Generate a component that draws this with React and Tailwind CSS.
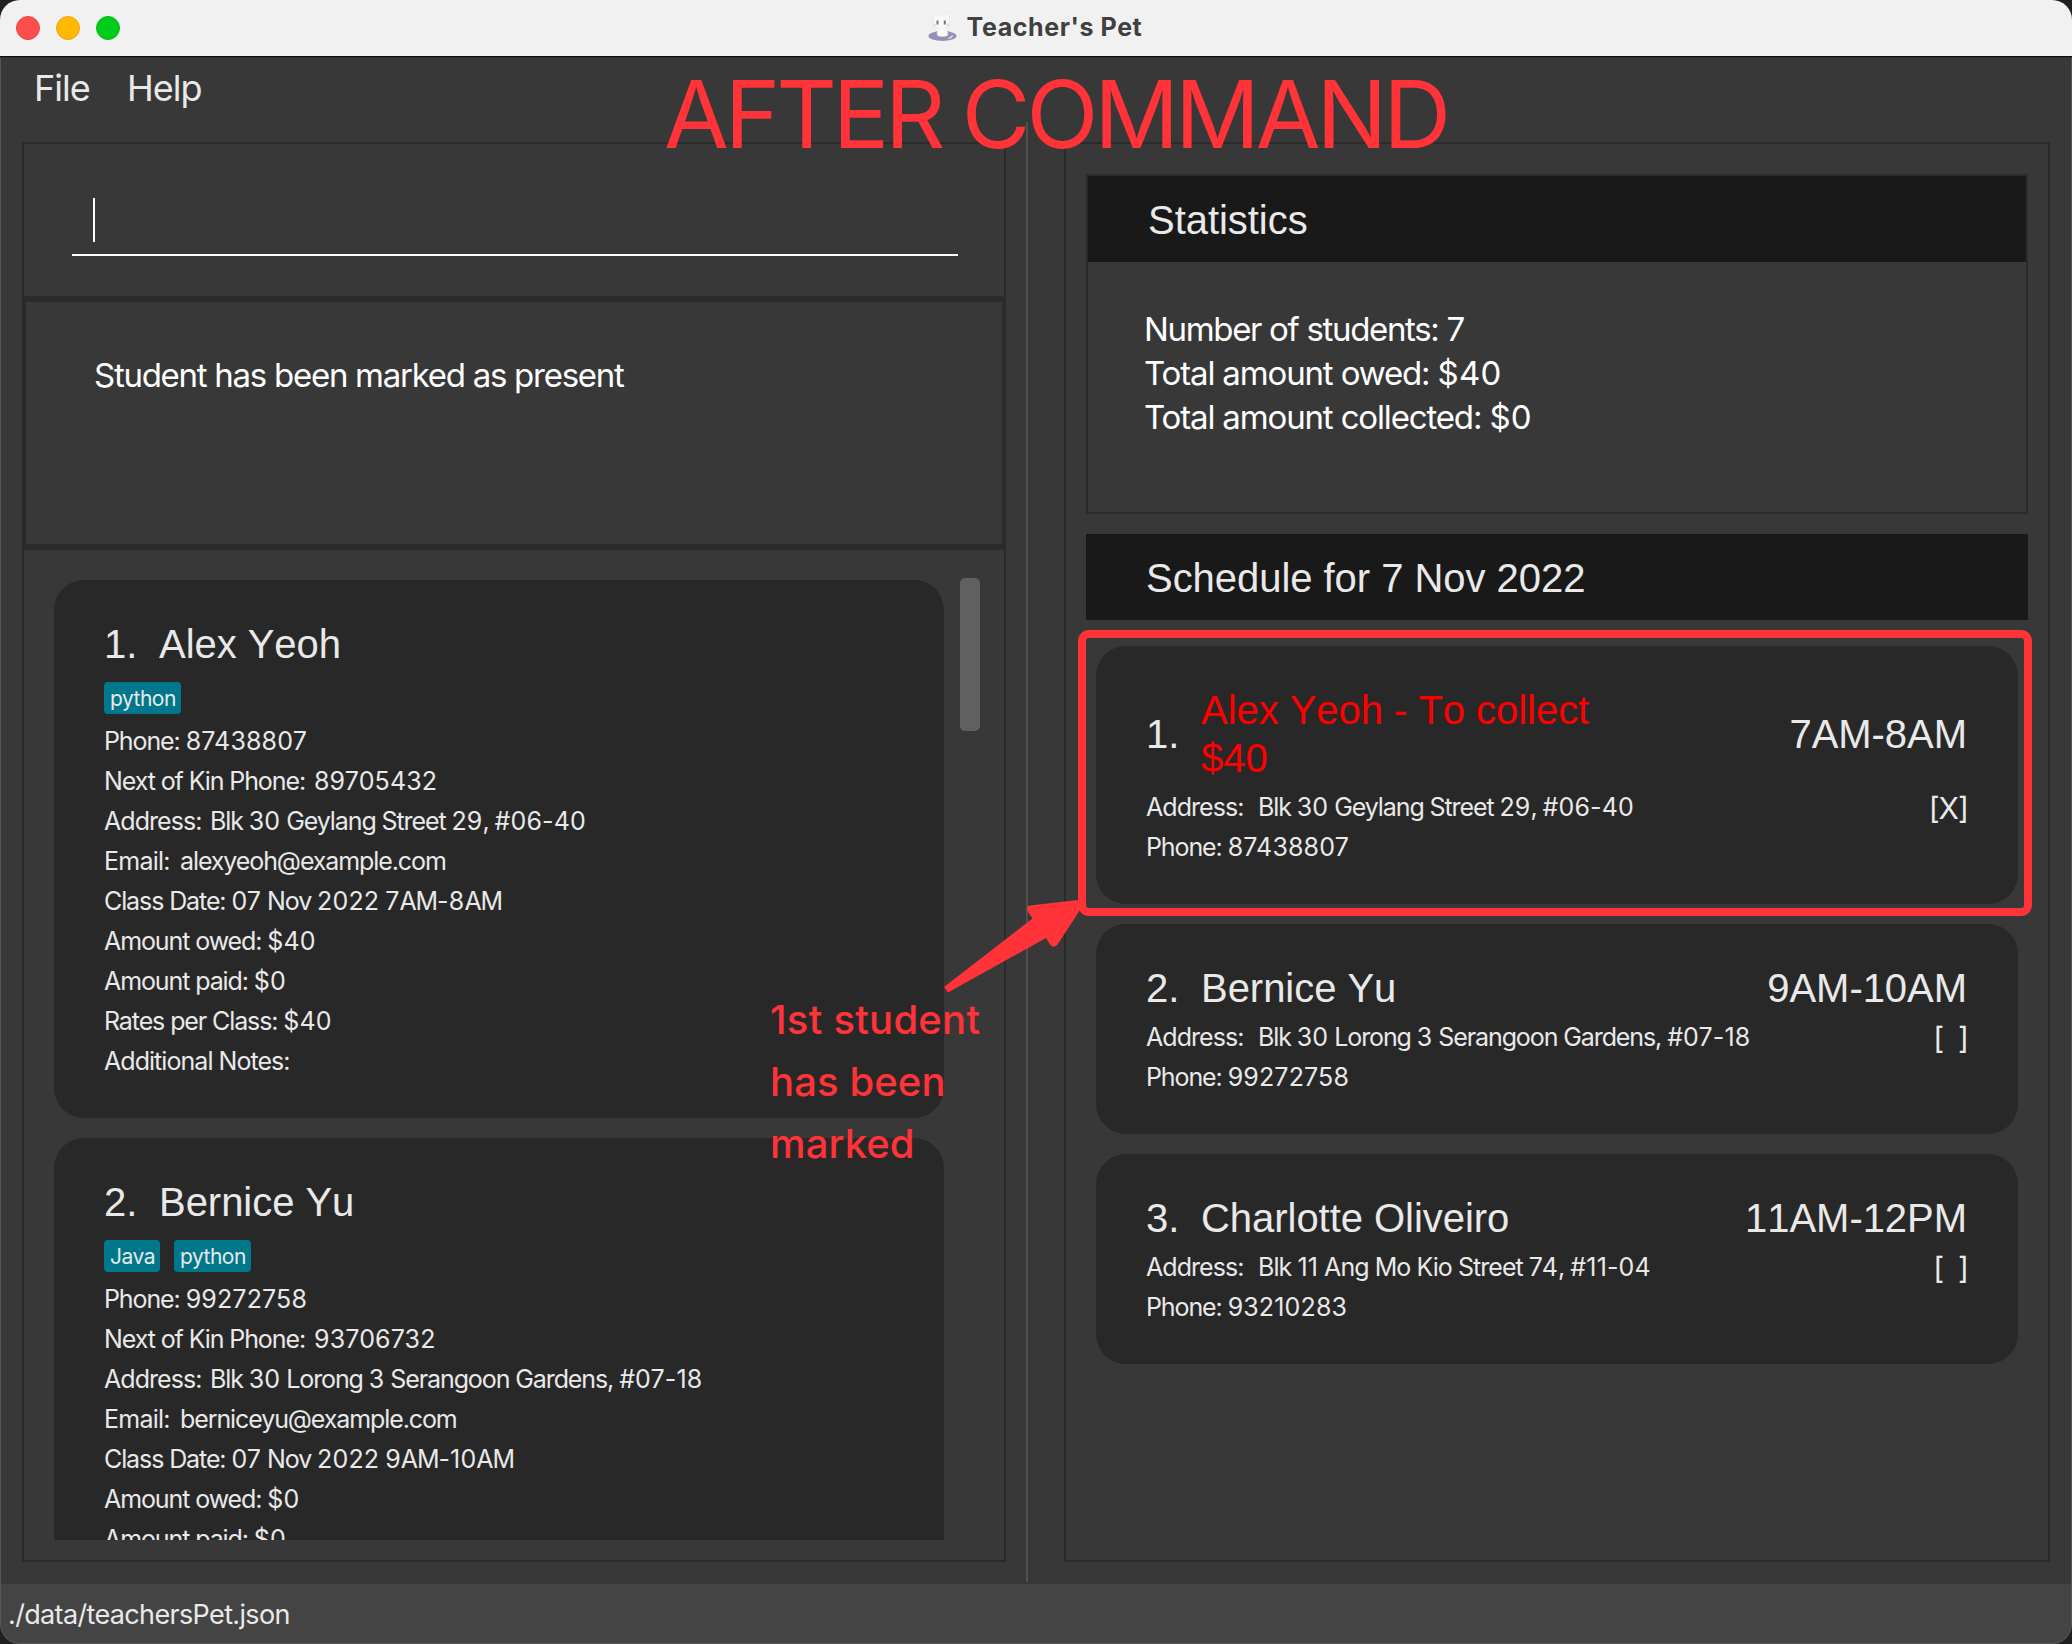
import React from "react";

const students = [
  {
    name: "Alex Yeoh",
    tags: ["python"],
    phone: "87438807",
    kin: "89705432",
    address: "Blk 30 Geylang Street 29, #06-40",
    email: "alexyeoh@example.com",
    lines: [
      "Class Date: 07 Nov 2022 7AM-8AM",
      "Amount owed: $40",
      "Amount paid: $0",
      "Rates per Class: $40",
      "Additional Notes:",
    ],
  },
  {
    name: "Bernice Yu",
    tags: ["Java", "python"],
    phone: "99272758",
    kin: "93706732",
    address: "Blk 30 Lorong 3 Serangoon Gardens, #07-18",
    email: "berniceyu@example.com",
    lines: ["Class Date: 07 Nov 2022 9AM-10AM", "Amount owed: $0", "Amount paid: $0"],
  },
];

const lessons = [
  {
    name: "Alex Yeoh - To collect $40",
    due: true,
    time: "7AM-8AM",
    mark: "[X]",
    address: "Blk 30 Geylang Street 29, #06-40",
    phone: "87438807",
  },
  {
    name: "Bernice Yu",
    time: "9AM-10AM",
    mark: "[  ]",
    address: "Blk 30 Lorong 3 Serangoon Gardens, #07-18",
    phone: "99272758",
  },
  {
    name: "Charlotte Oliveiro",
    time: "11AM-12PM",
    mark: "[  ]",
    address: "Blk 11 Ang Mo Kio Street 74, #11-04",
    addressTracking: "tracking-[-0.038em]",
    phone: "93210283",
  },
];

/* Letters are set tight while figures keep their normal advance. */
function Text({ children, tracking = "tracking-[-0.044em]" }) {
  return (
    <span className={`whitespace-pre ${tracking}`}>
      {children.split(/([\d#$-]+)/).map((part, i) =>
        i % 2 ? (
          <span key={i} className="tracking-[0.006em]">
            {part}
          </span>
        ) : (
          part
        )
      )}
    </span>
  );
}

function Row({ children }) {
  return <div className="flex h-10 items-center text-[25px] leading-10">{children}</div>;
}

function Title({ children, className = "" }) {
  return (
    <div
      className={`font-['Liberation_Sans',Arial,sans-serif] text-[40px] leading-[48px] tracking-[-0.04px] [font-kerning:none] ${className}`}
    >
      {children}
    </div>
  );
}

function StudentCard({ index, s }) {
  return (
    <div className="h-[538px] shrink-0 rounded-[30px] bg-[#282828] pt-10 pl-[50px]">
      <Title className="flex">
        <span className="w-[55px]">{index}.</span>
        <span>{s.name}</span>
      </Title>
      <div className="mt-3.5 mb-[7px] flex gap-3.5">
        {s.tags.map((t) => (
          <span
            key={t}
            className="flex h-8 items-center rounded-[4px] bg-[#00778b] pt-px pr-[5px] pl-[6px] text-[21px] leading-8 tracking-[-0.5px]"
          >
            {t}
          </span>
        ))}
      </div>
      <Row><Text>{`Phone: ${s.phone}`}</Text></Row>
      <Row>
        <div className="w-[210px]"><Text>Next of Kin Phone:</Text></div>
        <Text>{s.kin}</Text>
      </Row>
      <Row>
        <div className="w-[106px]"><Text tracking="tracking-[-0.038em]">Address:</Text></div>
        <Text>{s.address}</Text>
      </Row>
      <Row>
        <div className="w-[76px]"><Text tracking="tracking-[-0.03em]">Email:</Text></div>
        <Text>{s.email}</Text>
      </Row>
      {s.lines.map((line) => (
        <Row key={line}>
          <Text tracking={line === "Additional Notes:" ? "tracking-[-0.038em]" : undefined}>{line}</Text>
        </Row>
      ))}
    </div>
  );
}

function LessonCard({ index, l }) {
  return (
    <div className="rounded-[30px] bg-[#282828] pt-10 pr-[51px] pb-[37px] pl-[50px]">
      <div className="flex items-center">
        <Title className="w-[55px]">{index}.</Title>
        <Title className={l.due ? "w-[450px] text-[#ff0000]" : "w-[450px]"}>{l.name}</Title>
        <Title className="ml-auto">{l.time}</Title>
      </div>
      <div className="mt-[5px] flex justify-between">
        <div>
          <Row>
            <div className="w-[112px]"><Text tracking="tracking-[-0.038em]">Address:</Text></div>
            <Text tracking={l.addressTracking}>{l.address}</Text>
          </Row>
          <Row><Text>{`Phone: ${l.phone}`}</Text></Row>
        </div>
        <div className="-mr-px h-10 pt-px text-[30px] leading-10 tracking-[-1px] whitespace-pre">{l.mark}</div>
      </div>
    </div>
  );
}

function CatIcon() {
  return (
    <svg width="29" height="31" viewBox="0 0 29 31" fill="none">
      <ellipse cx="14.5" cy="25" rx="14" ry="5" fill="#9392b2" />
      <path d="M17 28.5c3 .2 4-2 6-3.2l1.500-1.300c1 1.300-.5 2.500-1.500 3.200z" fill="#e9e8f0" />
      <path
        d="M9.500 24.500c-1-2.500 0-5 1.200-7.500C6.500 16 4.500 13.500 5 9.500L5.800 1l4.200 3.200h6L20.500 1l1 8.500c.3 4-1.500 6.500-4.500 7.500 2 2.500 3.500 5 2.500 7.500-2 1.300-8 1.300-10 0z"
        fill="#f9f8f9"
        stroke="#e3e2e6"
        strokeWidth=".5"
      />
      <path d="M9.500 9.500v4M16.800 9.500v4" stroke="#73729a" strokeWidth="2" />
      <circle cx="6.500" cy="14" r="1.700" fill="#fbdccb" />
      <circle cx="20" cy="14" r="1.700" fill="#fbdccb" />
    </svg>
  );
}

export default function App() {
  return (
    <div className="h-[1644px] w-[2072px] overflow-hidden bg-[#202022] font-['Inter',sans-serif] text-[#e9e9e9]">
      <div className="relative flex h-full w-full flex-col overflow-hidden rounded-[20px] bg-[#383838]">
        <header className="flex h-14 shrink-0 items-start justify-center gap-[10px] bg-[#f1f1f1] pt-[11px] pr-[2px]">
          <CatIcon />
          <div className="mt-px text-[25px] leading-[30px] font-bold tracking-[0.6px] text-[#404040]">
            Teacher's Pet
          </div>
        </header>
        <div className="h-0.5 shrink-0 border-t border-[#111111] bg-[#2c2c2c]" />

        <nav className="flex h-16 shrink-0 pl-[34px] text-[36px] leading-[60px] tracking-[-1px]">
          <span className="w-[93px]">File</span>
          <span>Help</span>
        </nav>

        <main className="flex h-[1460px] shrink-0">
          <div className="w-[1026px] pt-5 pr-5 pl-[22px]">
            <div className="flex h-[1420px] flex-col border-2 border-[#2b2b2b]">
              <div className="h-[152px] shrink-0 px-12 pr-[46px] pt-[54px]">
                <div className="h-[58px] border-b-2 border-white pl-[21px]">
                  <div className="h-11 w-0.5 bg-white" />
                </div>
              </div>
              <div className="h-[254px] shrink-0 border-x-2 border-y-[6px] border-[#2b2b2b] pt-[51px] pl-[68px] text-[33px] leading-[44px] text-white">
                <Text tracking="tracking-[-1.27px]">Student has been marked as present</Text>
              </div>
              <div className="flex pt-7 pl-[30px]">
                <div className="flex h-[962px] w-[890px] flex-col gap-5 overflow-hidden pt-0.5">
                  {students.map((s, i) => (
                    <StudentCard key={s.name} index={i + 1} s={s} />
                  ))}
                </div>
                <div className="ml-4 h-[153px] w-5 rounded-[5px] bg-[#606060]" />
              </div>
            </div>
          </div>

          <div className="w-0.5 bg-[#505050]" />

          <div className="flex-1 pt-5 pr-[22px] pl-9">
            <div className="flex h-[1420px] flex-col border-2 border-[#2b2b2b] px-5 pt-[30px]">
              <section className="h-[340px] border-2 border-[#2b2b2b]">
                <div className="flex h-[86px] items-center bg-[#191919] pt-0.5 pl-[60px]">
                  <Title>Statistics</Title>
                </div>
                <div className="flex flex-col pt-[45px] pl-14 text-[33px] leading-[44px] text-white">
                  <Text tracking="tracking-[-1.33px]">Number of students: 7</Text>
                  <Text tracking="tracking-[-1.15px]">Total amount owed: $40</Text>
                  <Text tracking="tracking-[-1.15px]">Total amount collected: $0</Text>
                </div>
              </section>
              <section className="mt-5">
                <div className="flex h-[86px] items-center bg-[#191919] pt-0.5 pl-[60px]">
                  <Title>Schedule for 7 Nov 2022</Title>
                </div>
                <div className="flex flex-col gap-5 px-2.5 pt-[26px]">
                  {lessons.map((l, i) => (
                    <LessonCard key={l.name} index={i + 1} l={l} />
                  ))}
                </div>
              </section>
            </div>
          </div>
        </main>

        <footer className="mt-0.5 h-[60px] shrink-0 bg-[#444444] pt-px pl-2 text-[27px] leading-[60px] tracking-[-0.65px]">
          ./data/teachersPet.json
        </footer>

        {/* Window edge and controls */}
        <div className="absolute inset-x-0 top-[58px] bottom-0 rounded-b-[20px] border-x border-b border-[#565656]" />
        <div className="absolute top-4 left-4 flex gap-4">
          <span className="size-6 rounded-full border border-[#e84545] bg-[#ff4d4d]" />
          <span className="size-6 rounded-full border border-[#e8a60c] bg-[#ffba00]" />
          <span className="size-6 rounded-full border border-[#0cb81c] bg-[#00cc1b]" />
        </div>

        {/* Annotations drawn over the window */}
        <div className="absolute top-[67px] left-[664px] text-[94px] leading-[94px] font-[430] tracking-[-4.1px] [word-spacing:-2px] whitespace-nowrap text-[#ff3338]">
          AFTER COMMAND
        </div>
        <div className="absolute top-[630px] left-[1078px] h-[286px] w-[954px] rounded-[11px] border-8 border-[#ff3338]" />
        <svg
          className="absolute top-[890px] left-[940px]"
          width="150"
          height="110"
          viewBox="940 890 150 110"
          fill="#ff3338"
        >
          <path d="M944 987L1032.500 918.500L1028 912Q1025.500 906.500 1030 905.500L1082 899.500L1082 907L1057.500 944.500Q1054 948.500 1050.500 945L1046 938L948 992.500Z" />
        </svg>
        <div className="absolute top-[989px] left-[770px] text-[40px] leading-[62px] font-[450] tracking-[0.1px] whitespace-nowrap text-[#ff3338]">
          <div className="tracking-[0.25px]">1st student</div>
          <div>has been</div>
          <div>marked</div>
        </div>
      </div>
    </div>
  );
}
